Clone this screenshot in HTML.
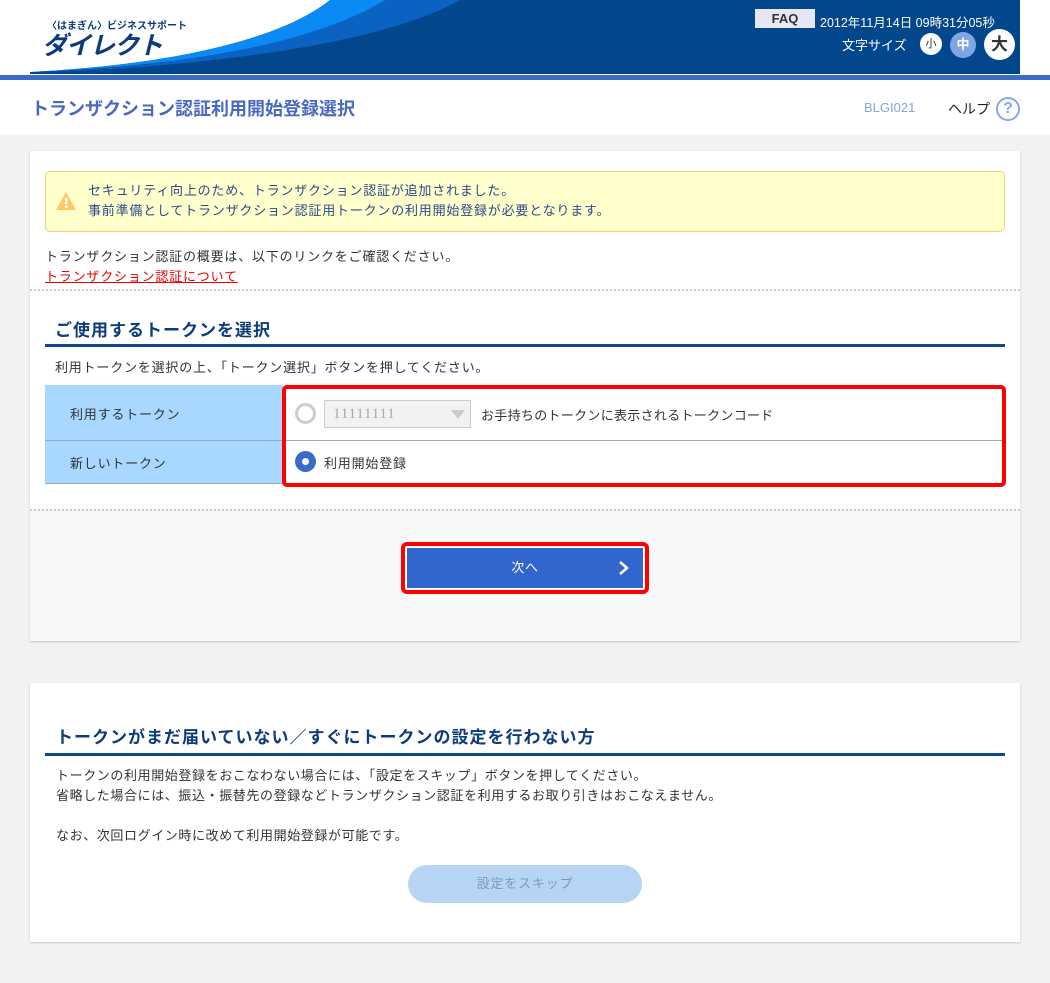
<!DOCTYPE html>
<html><head><meta charset="utf-8"><style>
*{margin:0;padding:0;box-sizing:border-box}
body{width:1050px;height:983px;background:#f2f2f2;font-family:"Liberation Sans","Noto Sans CJK JP",sans-serif;font-size:13px;color:#333;position:relative;overflow:hidden}
.abs{position:absolute}
.card{position:absolute;left:30px;width:990px;background:#fff;box-shadow:0 1px 2px rgba(0,0,0,.18);letter-spacing:0.8px}
.h2{font-size:17px;font-weight:bold;color:#0d3c7c;letter-spacing:1px}
</style></head><body>
<svg class="abs" style="left:0;top:0" width="1050" height="81">
<rect width="1050" height="81" fill="#fff"/>
<rect x="30" y="0" width="990" height="74" fill="#02468c"/>
<path d="M30 0 H330 C280 40 170 65 30 72 Z" fill="#fff"/>
<path d="M330 0 H385 C320 40 200 66 30 72 C170 65 280 40 330 0Z" fill="#0a8af5"/>
<path d="M385 0 H460 C390 40 230 66 30 73 C200 66 320 40 385 0Z" fill="#0a62c2"/>
<rect x="0" y="75" width="1050" height="5" fill="#3a6bc7"/>
</svg>
<div class="abs" style="left:47px;top:17px;font-size:10px;font-weight:bold;color:#0d3c7c">〈はまぎん〉ビジネスサポート</div>
<div class="abs" style="left:42px;top:26px;font-size:25px;font-weight:bold;font-style:italic;color:#0d3c7c;letter-spacing:-1px">ダイレクト</div>
<div class="abs" style="left:755px;top:9px;width:60px;height:19px;background:#e6e6f5;color:#333;font-weight:bold;font-size:13px;text-align:center;line-height:19px">FAQ</div>
<div class="abs" style="left:820px;top:12px;color:#fff;font-size:12.5px">2012年11月14日 09時31分05秒</div>
<div class="abs" style="left:842px;top:35px;color:#fff;font-size:13px">文字サイズ</div>
<div class="abs" style="left:920px;top:33px;width:22px;height:22px;border-radius:50%;background:#fff;color:#333;font-size:11px;text-align:center;line-height:22px">小</div>
<div class="abs" style="left:950px;top:32px;width:26px;height:26px;border-radius:50%;background:#7fa5e5;color:#fff;font-size:13px;font-weight:bold;text-align:center;line-height:26px">中</div>
<div class="abs" style="left:984px;top:29px;width:31px;height:31px;border-radius:50%;background:#fff;color:#333;font-size:17px;font-weight:bold;text-align:center;line-height:31px">大</div>
<div class="abs" style="left:0;top:80px;width:1050px;height:55px;background:#fff"></div>
<div class="abs" style="left:31px;top:95px;font-size:18px;font-weight:bold;color:#4a68c0">トランザクション認証利用開始登録選択</div>
<div class="abs" style="left:864px;top:100px;font-size:13px;color:#88a4dc">BLGI021</div>
<div class="abs" style="left:948px;top:99px;font-size:14px;color:#222">ヘルプ</div>
<div class="abs" style="left:996px;top:97px;width:24px;height:24px;border-radius:50%;border:2px solid #88a8e4;color:#88a8e4;font-weight:bold;font-size:16px;text-align:center;line-height:20px">?</div>

<div class="card" style="top:151px;height:490px">
 <div class="abs" style="left:15px;top:20px;width:960px;height:61px;background:#ffffcc;border:1px solid #f0d080;border-radius:5px"></div>
 <svg class="abs" style="left:25px;top:40px" width="22" height="20"><path d="M11 1 L21 19 H1 Z" fill="#ffc766"/><rect x="10" y="7" width="2.4" height="6" fill="#fff"/><rect x="10" y="14.5" width="2.4" height="2.4" fill="#fff"/></svg>
 <div class="abs" style="left:58px;top:30px;color:#2a4a8a;line-height:20px;font-size:13px">セキュリティ向上のため、トランザクション認証が追加されました。<br>事前準備としてトランザクション認証用トークンの利用開始登録が必要となります。</div>
 <div class="abs" style="left:15px;top:96px;line-height:20px">トランザクション認証の概要は、以下のリンクをご確認ください。<br><span style="color:#e00;text-decoration:underline">トランザクション認証について</span></div>
 <div class="abs" style="left:0;top:138px;width:990px;border-top:2px dotted #ccc"></div>
 <div class="abs h2" style="left:25px;top:165px">ご使用するトークンを選択</div>
 <div class="abs" style="left:15px;top:193px;width:960px;height:3px;background:#0d4a8c"></div>
 <div class="abs" style="left:25px;top:206px">利用トークンを選択の上、「トークン選択」ボタンを押してください。</div>
 <div class="abs" style="left:15px;top:234px;width:238px;height:99px;background:#a8d8ff;border-bottom:1px solid #9ab"></div>
 <div class="abs" style="left:15px;top:289px;width:960px;border-top:1px solid #9ab"></div>
 <div class="abs" style="left:40px;top:253px">利用するトークン</div>
 <div class="abs" style="left:40px;top:302px">新しいトークン</div>
 <div class="abs" style="left:252px;top:234px;width:724px;height:102px;border:4px solid #f00;border-radius:5px"></div>
 <div class="abs" style="left:265px;top:252px;width:21px;height:21px;border-radius:50%;border:3px solid #ccc"></div>
 <div class="abs" style="left:294px;top:249px;width:147px;height:28px;border:1px solid #ccc;background:#f2f2f2;color:#aaa;font-family:'Liberation Serif',serif;font-size:15px;line-height:26px;padding-left:8px">11111111</div>
 <div class="abs" style="left:421px;top:259px;border-left:7px solid transparent;border-right:7px solid transparent;border-top:9px solid #ccc"></div>
 <div class="abs" style="left:451px;top:254px;letter-spacing:0.3px">お手持ちのトークンに表示されるトークンコード</div>
 <div class="abs" style="left:265px;top:300px;width:21px;height:21px;border-radius:50%;background:#3a6bc7"></div>
 <div class="abs" style="left:272px;top:307px;width:7px;height:7px;border-radius:50%;background:#fff"></div>
 <div class="abs" style="left:294px;top:302px">利用開始登録</div>
 <div class="abs" style="left:0;top:358px;width:990px;height:132px;background:#f8f8f8;border-top:2px dotted #ccc"></div>
 <div class="abs" style="left:371px;top:391px;width:248px;height:52px;border:4px solid #f00;border-radius:6px;background:#fff"></div>
 <div class="abs" style="left:377px;top:397px;width:236px;height:40px;background:#3366cc;color:#fff;text-align:center;line-height:40px">次へ</div>
 <svg class="abs" style="left:588px;top:409px" width="12" height="16"><path d="M2 2 L9 8 L2 14" stroke="#fff" stroke-width="2.5" fill="none"/></svg>
</div>

<div class="card" style="top:683px;height:259px">
 <div class="abs h2" style="left:26px;top:40px">トークンがまだ届いていない／すぐにトークンの設定を行わない方</div>
 <div class="abs" style="left:15px;top:70px;width:960px;height:3px;background:#0d4a8c"></div>
 <div class="abs" style="left:26px;top:83px;line-height:20px;letter-spacing:0.6px">トークンの利用開始登録をおこなわない場合には、「設定をスキップ」ボタンを押してください。<br>省略した場合には、振込・振替先の登録などトランザクション認証を利用するお取り引きはおこなえません。<br><br>なお、次回ログイン時に改めて利用開始登録が可能です。</div>
 <div class="abs" style="left:378px;top:182px;width:234px;height:38px;border-radius:19px;background:#b8d4f4;color:#7d97c4;text-align:center;line-height:38px">設定をスキップ</div>
</div>
</body></html>
